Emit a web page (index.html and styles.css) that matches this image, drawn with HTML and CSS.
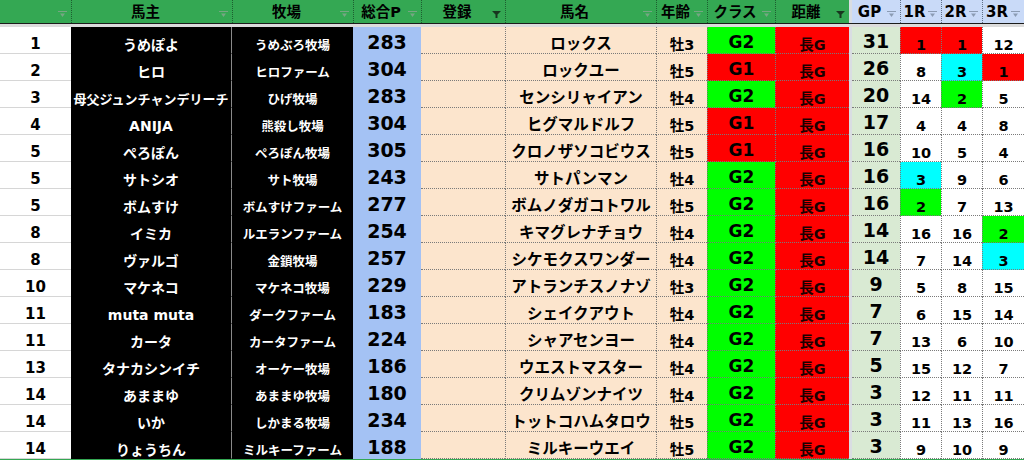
FILE: index.html
```html
<!DOCTYPE html>
<html lang="ja">
<head>
<meta charset="utf-8">
<title>ランキング</title>
<link rel="stylesheet" href="styles.css">
</head>
<body>
<div class="sheet">
  <div class="head">
    <div class="h"><span></span><svg viewBox="0 0 9 7"><rect x="0" y="0" width="9" height="1"/><polygon points="2,2.5 7,2.5 4.5,6"/></svg></div>
    <div class="h"><span>馬主</span><svg viewBox="0 0 9 7"><rect x="0" y="0" width="9" height="1"/><polygon points="2,2.5 7,2.5 4.5,6"/></svg></div>
    <div class="h"><span>牧場</span><svg viewBox="0 0 9 7"><rect x="0" y="0" width="9" height="1"/><polygon points="2,2.5 7,2.5 4.5,6"/></svg></div>
    <div class="h"><span>総合P</span><svg viewBox="0 0 9 7"><rect x="0" y="0" width="9" height="1"/><polygon points="2,2.5 7,2.5 4.5,6"/></svg></div>
    <div class="h"><span>登録</span><svg class="on" viewBox="0 0 9 7"><polygon points="0,0 9,0 5.5,3.5 5.5,7 3.5,7 3.5,3.5"/></svg></div>
    <div class="h"><span>馬名</span><svg viewBox="0 0 9 7"><rect x="0" y="0" width="9" height="1"/><polygon points="2,2.5 7,2.5 4.5,6"/></svg></div>
    <div class="h"><span>年齢</span><svg viewBox="0 0 9 7"><rect x="0" y="0" width="9" height="1"/><polygon points="2,2.5 7,2.5 4.5,6"/></svg></div>
    <div class="h"><span>クラス</span><svg viewBox="0 0 9 7"><rect x="0" y="0" width="9" height="1"/><polygon points="2,2.5 7,2.5 4.5,6"/></svg></div>
    <div class="h"><span>距離</span><svg class="on" viewBox="0 0 9 7"><polygon points="0,0 9,0 5.5,3.5 5.5,7 3.5,7 3.5,3.5"/></svg></div>
    <div class="h gap"></div>
    <div class="h blue first"><span>GP</span><svg viewBox="0 0 9 7"><rect x="0" y="0" width="9" height="1"/><polygon points="2,2.5 7,2.5 4.5,6"/></svg></div>
    <div class="h blue"><span>1R</span><svg viewBox="0 0 9 7"><rect x="0" y="0" width="9" height="1"/><polygon points="2,2.5 7,2.5 4.5,6"/></svg></div>
    <div class="h blue"><span>2R</span><svg viewBox="0 0 9 7"><rect x="0" y="0" width="9" height="1"/><polygon points="2,2.5 7,2.5 4.5,6"/></svg></div>
    <div class="h blue"><span>3R</span><svg viewBox="0 0 9 7"><rect x="0" y="0" width="9" height="1"/><polygon points="2,2.5 7,2.5 4.5,6"/></svg></div>
  </div>
  <div class="band"></div>

  <div class="row"><div class="c rank">1</div><div class="c owner">うめぽよ</div><div class="c farm">うめぶろ牧場</div><div class="c total">283</div><div class="c reg"></div><div class="c horse">ロックス</div><div class="c age">牡3</div><div class="c cls g2">G2</div><div class="c dist">長G</div><div class="c gap"></div><div class="c gp">31</div><div class="c r red">1</div><div class="c r red">1</div><div class="c r">12</div></div>
  <div class="row"><div class="c rank">2</div><div class="c owner">ヒロ</div><div class="c farm">ヒロファーム</div><div class="c total">304</div><div class="c reg"></div><div class="c horse">ロックユー</div><div class="c age">牡5</div><div class="c cls g1">G1</div><div class="c dist">長G</div><div class="c gap"></div><div class="c gp">26</div><div class="c r">8</div><div class="c r cyan">3</div><div class="c r red">1</div></div>
  <div class="row"><div class="c rank">3</div><div class="c owner small">母父ジュンチャンデリーチ</div><div class="c farm">ひげ牧場</div><div class="c total">283</div><div class="c reg"></div><div class="c horse">センシリャイアン</div><div class="c age">牡4</div><div class="c cls g2">G2</div><div class="c dist">長G</div><div class="c gap"></div><div class="c gp">20</div><div class="c r">14</div><div class="c r green">2</div><div class="c r">5</div></div>
  <div class="row"><div class="c rank">4</div><div class="c owner">ANIJA</div><div class="c farm">熊殺し牧場</div><div class="c total">304</div><div class="c reg"></div><div class="c horse">ヒグマルドルフ</div><div class="c age">牡5</div><div class="c cls g1">G1</div><div class="c dist">長G</div><div class="c gap"></div><div class="c gp">17</div><div class="c r">4</div><div class="c r">4</div><div class="c r">8</div></div>
  <div class="row"><div class="c rank">5</div><div class="c owner">ぺろぽん</div><div class="c farm">ぺろぽん牧場</div><div class="c total">305</div><div class="c reg"></div><div class="c horse">クロノザソコビウス</div><div class="c age">牡5</div><div class="c cls g1">G1</div><div class="c dist">長G</div><div class="c gap"></div><div class="c gp">16</div><div class="c r">10</div><div class="c r">5</div><div class="c r">4</div></div>
  <div class="row"><div class="c rank">5</div><div class="c owner">サトシオ</div><div class="c farm">サト牧場</div><div class="c total">243</div><div class="c reg"></div><div class="c horse">サトパンマン</div><div class="c age">牡4</div><div class="c cls g2">G2</div><div class="c dist">長G</div><div class="c gap"></div><div class="c gp">16</div><div class="c r cyan">3</div><div class="c r">9</div><div class="c r">6</div></div>
  <div class="row"><div class="c rank">5</div><div class="c owner">ボムすけ</div><div class="c farm">ボムすけファーム</div><div class="c total">277</div><div class="c reg"></div><div class="c horse">ボムノダガコトワル</div><div class="c age">牡5</div><div class="c cls g2">G2</div><div class="c dist">長G</div><div class="c gap"></div><div class="c gp">16</div><div class="c r green">2</div><div class="c r">7</div><div class="c r">13</div></div>
  <div class="row"><div class="c rank">8</div><div class="c owner">イミカ</div><div class="c farm">ルエランファーム</div><div class="c total">254</div><div class="c reg"></div><div class="c horse">キマグレナチョウ</div><div class="c age">牡4</div><div class="c cls g2">G2</div><div class="c dist">長G</div><div class="c gap"></div><div class="c gp">14</div><div class="c r">16</div><div class="c r">16</div><div class="c r green">2</div></div>
  <div class="row"><div class="c rank">8</div><div class="c owner">ヴァルゴ</div><div class="c farm">金鎖牧場</div><div class="c total">257</div><div class="c reg"></div><div class="c horse">シケモクスワンダー</div><div class="c age">牡4</div><div class="c cls g2">G2</div><div class="c dist">長G</div><div class="c gap"></div><div class="c gp">14</div><div class="c r">7</div><div class="c r">14</div><div class="c r cyan">3</div></div>
  <div class="row"><div class="c rank">10</div><div class="c owner">マケネコ</div><div class="c farm">マケネコ牧場</div><div class="c total">229</div><div class="c reg"></div><div class="c horse">アトランチスノナゾ</div><div class="c age">牡3</div><div class="c cls g2">G2</div><div class="c dist">長G</div><div class="c gap"></div><div class="c gp">9</div><div class="c r">5</div><div class="c r">8</div><div class="c r">15</div></div>
  <div class="row"><div class="c rank">11</div><div class="c owner">muta muta</div><div class="c farm">ダークファーム</div><div class="c total">183</div><div class="c reg"></div><div class="c horse">シェイクアウト</div><div class="c age">牡4</div><div class="c cls g2">G2</div><div class="c dist">長G</div><div class="c gap"></div><div class="c gp">7</div><div class="c r">6</div><div class="c r">15</div><div class="c r">14</div></div>
  <div class="row"><div class="c rank">11</div><div class="c owner">カータ</div><div class="c farm">カータファーム</div><div class="c total">224</div><div class="c reg"></div><div class="c horse">シャアセンヨー</div><div class="c age">牡4</div><div class="c cls g2">G2</div><div class="c dist">長G</div><div class="c gap"></div><div class="c gp">7</div><div class="c r">13</div><div class="c r">6</div><div class="c r">10</div></div>
  <div class="row"><div class="c rank">13</div><div class="c owner">タナカシンイチ</div><div class="c farm">オーケー牧場</div><div class="c total">186</div><div class="c reg"></div><div class="c horse">ウエストマスター</div><div class="c age">牡4</div><div class="c cls g2">G2</div><div class="c dist">長G</div><div class="c gap"></div><div class="c gp">5</div><div class="c r">15</div><div class="c r">12</div><div class="c r">7</div></div>
  <div class="row"><div class="c rank">14</div><div class="c owner">あままゆ</div><div class="c farm">あままゆ牧場</div><div class="c total">180</div><div class="c reg"></div><div class="c horse">クリムゾンナイツ</div><div class="c age">牡4</div><div class="c cls g2">G2</div><div class="c dist">長G</div><div class="c gap"></div><div class="c gp">3</div><div class="c r">12</div><div class="c r">11</div><div class="c r">11</div></div>
  <div class="row"><div class="c rank">14</div><div class="c owner">いか</div><div class="c farm">しかまる牧場</div><div class="c total">234</div><div class="c reg"></div><div class="c horse">トットコハムタロウ</div><div class="c age">牡5</div><div class="c cls g2">G2</div><div class="c dist">長G</div><div class="c gap"></div><div class="c gp">3</div><div class="c r">11</div><div class="c r">13</div><div class="c r">16</div></div>
  <div class="row"><div class="c rank">14</div><div class="c owner">りょうちん</div><div class="c farm">ミルキーファーム</div><div class="c total">188</div><div class="c reg"></div><div class="c horse">ミルキーウエイ</div><div class="c age">牡5</div><div class="c cls g2">G2</div><div class="c dist">長G</div><div class="c gap"></div><div class="c gp">3</div><div class="c r">9</div><div class="c r">10</div><div class="c r">9</div></div>

  <div class="foot"></div>
</div>
</body>
</html>
```

FILE: styles.css
```css
* { box-sizing: border-box; }

html, body {
  margin: 0;
  padding: 0;
  background: #ffffff;
}

body {
  width: 1024px;
  height: 460px;
  overflow: hidden;
  font-family: "DejaVu Sans", "Noto Sans CJK JP", sans-serif;
  font-weight: bold;
  color: #000;
}

.sheet {
  display: flex;
  flex-direction: column;
}

.head,
.row {
  display: grid;
  grid-template-columns: 71px 161px 121px 68px 84px 151px 51px 68px 74px 3px 48px 41px 41px 42px;
}

/* header */
.head {
  height: 24px;
  border-bottom: 1px solid #1b1b1b;
}

.h {
  display: flex;
  align-items: center;
  background: #34a853;
  border-left: 1px dotted #1d5e30;
  font-size: 14.5px;
  line-height: 1;
  padding-top: 1px;
  white-space: nowrap;
}

.h:first-child { border-left: none; }

.h span {
  flex: 1;
  text-align: center;
}

.h svg {
  flex: none;
  width: 9px;
  height: 7px;
  margin: 5px 4px 0 0;
  fill: #76a683;
}

.h svg.on { fill: #18361f; }

.h.gap {
  background: #d9dde2;
  border-left: none;
}

.h.blue {
  background: #c9daf8;
  border-left-color: #5f6f86;
  font-size: 15px;
}

.h.blue svg { fill: #8b9bb3; }

.h.blue.first { border-left: none; }

.band {
  height: 3px;
  background: #dcdcdc;
}

/* body rows */
.row { height: 27px; }

.c {
  display: flex;
  align-items: flex-end;
  justify-content: center;
  line-height: 1;
  padding-bottom: 1px;
  white-space: nowrap;
  border-bottom: 1px dotted #7a7a7a;
}

.rank {
  background: #fff;
  font-size: 15px;
  border-bottom: 1px solid #d6d6d6;
}

.owner {
  background: #000;
  color: #fff;
  font-size: 14px;
  border-bottom: 1px solid #000;
  border-right: 1px solid #8a8a8a;
}

.owner.small { font-size: 13px; }

.farm {
  background: #000;
  color: #fff;
  font-size: 12.5px;
  border-bottom: 1px solid #000;
}

.total {
  background: #a4c2f4;
  font-size: 19px;
  padding-bottom: 1px;
  border-bottom: 1px solid #a4c2f4;
}

.reg { background: #fce5cd; }

.horse {
  background: #fce5cd;
  font-size: 15.5px;
  border-left: 1px dotted #7a7a7a;
}

.age {
  background: #fce5cd;
  font-size: 14.5px;
  border-left: 1px dotted #7a7a7a;
}

.cls {
  font-size: 17px;
  padding-bottom: 2px;
  border-left: 1px dotted #7a7a7a;
}

.cls.g1 { background: #ff0000; }
.cls.g2 { background: #00ff00; }

.dist {
  background: #ff0000;
  font-size: 14.5px;
  color: #1a0000;
  border-left: 1px dotted #7a7a7a;
}

.c.gap {
  background: #d9dde2;
  border-bottom: none;
}

.gp {
  background: #d9ead3;
  font-size: 19px;
  padding-bottom: 2px;
}

.r {
  background: #fff;
  font-size: 14.5px;
  padding-bottom: 1px;
  border-left: 1px dotted #7a7a7a;
}

.r.red { background: #ff0000; }
.r.cyan { background: #00ffff; }
.r.green { background: #00ff00; }

.foot {
  height: 1px;
  background: #34a853;
}
```
